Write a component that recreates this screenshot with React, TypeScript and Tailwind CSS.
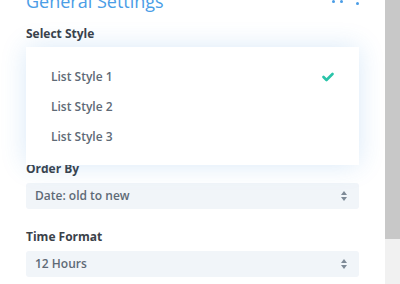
import { useState } from 'react';

const styles = ['List Style 1', 'List Style 2', 'List Style 3'];

const UpDown = () => (
  <svg width="6" height="10" viewBox="0 0 6 10" className="fill-[#7e8a97]">
    <path d="M3 0 L6 4 H0 Z" />
    <path d="M3 10 L6 6 H0 Z" />
  </svg>
);

const Check = () => (
  <svg width="12" height="10" viewBox="0 0 12 10">
    <path d="M1.5 5 L4.5 8 L10.5 2" fill="none" stroke="#29c4a9" strokeWidth="2.6" strokeLinecap="round" strokeLinejoin="round" />
  </svg>
);

const Field = ({ label, value }: { label: string; value: string }) => (
  <div className="flex flex-col">
    <div className="text-[12px] font-bold leading-4 text-[#3a4149]">{label}</div>
    <div className="mt-[6px] h-[26px] rounded-[3px] bg-[#f1f5f9] pl-[9px] pr-[12px] flex items-center justify-between text-[12px] font-semibold text-[#5e6a76]">
      <span>{value}</span>
      <UpDown />
    </div>
  </div>
);

export default function App() {
  const [selected] = useState(0);

  return (
    <div className="flex h-[284px] w-[400px] overflow-hidden bg-white font-['Open_Sans',sans-serif]">
      <div className="flex-1 px-[26px]">
        <div className="flex h-[26px] items-start justify-between">
          <h2 className="-mt-[10px] text-[18px] leading-[22px] text-[#4a9de6]">General Settings</h2>
          <div className="flex items-start">
            <span className="h-[3px] w-[3px] rounded-full bg-[#4a9de6]" />
            <span className="ml-[5px] h-[3px] w-[3px] rounded-full bg-[#4a9de6]" />
            <span className="ml-[13px] mt-[2px] h-[3px] w-[3px] rounded-full bg-[#4a9de6]" />
          </div>
        </div>

        <div className="text-[12px] font-bold leading-4 text-[#3a4149]">Select Style</div>

        <div className="relative z-10 mt-[5px] -mb-[4px] bg-white pt-[15px] pb-[13px] shadow-[0_0_24px_rgba(43,135,218,0.18)]">
          {styles.map((s, i) => (
            <div key={s} className="flex h-[30px] items-center justify-between pl-[25px] pr-[25px] text-[12px] font-semibold text-[#5e6a76]">
              <span>{s}</span>
              {i === selected && <Check />}
            </div>
          ))}
        </div>

        <div className="flex flex-col gap-[20px]">
          <Field label="Order By" value="Date: old to new" />
          <Field label="Time Format" value="12 Hours" />
        </div>
      </div>

      <div className="flex w-[15px] flex-col bg-[#f1f1f1]">
        <div className="h-[239px] bg-[#c8c8c8]" />
      </div>
    </div>
  );
}
